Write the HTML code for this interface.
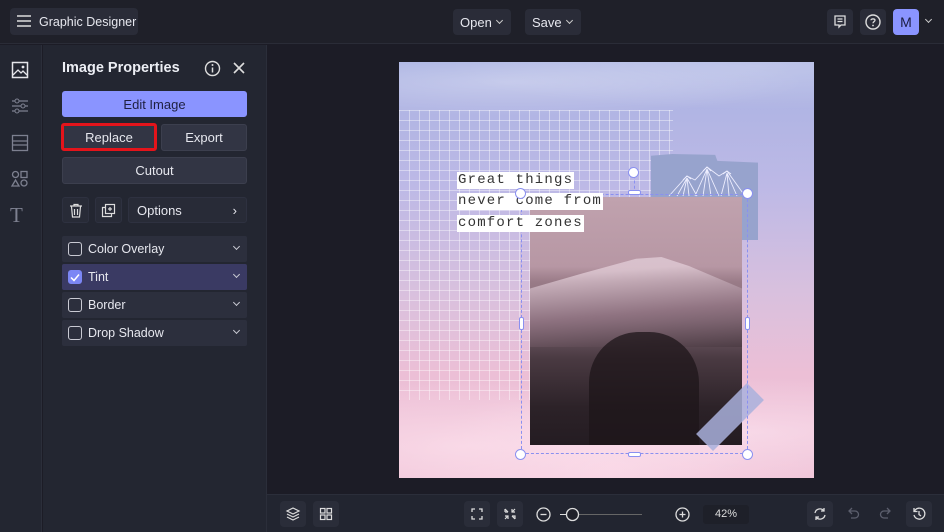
<!DOCTYPE html>
<html><head><meta charset="utf-8"><style>
*{box-sizing:border-box;margin:0;padding:0}
body{width:944px;height:532px;overflow:hidden;background:#1c1c26;font-family:"Liberation Sans",sans-serif;color:#e6e7ee;position:relative}
.abs{position:absolute}
.top{left:0;top:0;width:944px;height:44px;background:#1f2029;border-bottom:1px solid #2a2c37}
.btn{position:absolute;background:#2a2c38;border-radius:4px;font-size:13px;color:#e6e7ee;display:flex;align-items:center;justify-content:center;white-space:nowrap}
.rail{left:0;top:45px;width:42px;height:487px;background:#232631;border-right:1px solid #2b2e3a}
.panel{left:43px;top:45px;width:224px;height:487px;background:#232631;border-right:1px solid #2b2e3a}
.pb{position:absolute;background:#323544;border:1px solid #3c3f4e;border-radius:3px;font-size:13px;color:#e6e7ee;display:flex;align-items:center;justify-content:center}
.row{position:absolute;left:62px;width:185px;height:26px;background:#2c2f3d;border-radius:2px;font-size:12.5px;display:flex;align-items:center;padding-left:26px}
.row .cb{position:absolute;left:6px;top:6px;width:14px;height:14px;border:1.5px solid #c9cad3;border-radius:3px}
.row .ch{position:absolute;right:8px;top:8px;width:5px;height:5px;border-right:1.3px solid #c9cad3;border-bottom:1.3px solid #c9cad3;transform:rotate(45deg)}
.bottom{left:267px;top:494px;width:677px;height:38px;background:#222530;border-top:1px solid #2b2e3a}
.ib{position:absolute;width:26px;height:26px;background:#2a2d39;border-radius:4px}
.tx{position:absolute;font-family:"Liberation Mono",monospace;font-size:14px;background:#fff;color:#333;padding:0 1px;line-height:17px;letter-spacing:1.2px;white-space:nowrap}
</style></head><body>
<div class="abs top"></div>
<div class="btn" style="left:10px;top:8px;width:128px;height:27px;justify-content:flex-start;padding-left:29px;font-size:12.5px">Graphic Designer</div>
<svg class="abs" style="left:16px;top:14px" width="16" height="14"><path d="M1 2H15M1 7H15M1 12H15" stroke="#ddd" stroke-width="1.4"/></svg>
<div class="btn" style="left:453px;top:9px;width:58px;height:26px;justify-content:flex-start;padding-left:7px">Open<span style="position:absolute;left:44px;top:9px;width:5px;height:5px;border-right:1.2px solid #ccc;border-bottom:1.2px solid #ccc;transform:rotate(45deg)"></span></div>
<div class="btn" style="left:525px;top:9px;width:56px;height:26px;justify-content:flex-start;padding-left:7px">Save<span style="position:absolute;left:42px;top:9px;width:5px;height:5px;border-right:1.2px solid #ccc;border-bottom:1.2px solid #ccc;transform:rotate(45deg)"></span></div>
<div class="btn" style="left:827px;top:9px;width:26px;height:26px"><svg width="16" height="16"><path d="M3 2H13V11H9L7 13V11H3Z M5.5 5H10.5M5.5 7.5H10.5" stroke="#ddd" fill="none" stroke-width="1.3"/></svg></div>
<div class="btn" style="left:860px;top:9px;width:26px;height:26px"><svg width="18" height="18"><circle cx="9" cy="9" r="7" stroke="#ddd" fill="none" stroke-width="1.4"/><path d="M7 7.2C7 5.5 11 5.5 11 7.3C11 8.6 9 8.6 9 10.3" stroke="#ddd" fill="none" stroke-width="1.3"/><circle cx="9" cy="12.5" r=".9" fill="#ddd"/></svg></div>
<div class="btn" style="left:893px;top:9px;width:26px;height:26px;background:#8a94ff;color:#1a1c40;font-size:14px">M</div>
<div class="abs" style="left:926px;top:17px;width:5px;height:5px;border-right:1.2px solid #ccc;border-bottom:1.2px solid #ccc;transform:rotate(45deg)"></div>

<div class="abs rail"></div>
<svg class="abs" style="left:11px;top:61px" width="18" height="18"><rect x="1.5" y="1.5" width="15" height="15" fill="none" stroke="#e5e5ea" stroke-width="1.5"/><path d="M2 14L7 9L10 12L12 10L16 14" fill="none" stroke="#e5e5ea" stroke-width="1.3"/><circle cx="12" cy="6" r="1.4" fill="#e5e5ea"/></svg>
<svg class="abs" style="left:11px;top:97px" width="18" height="18"><path d="M1 4H17M1 9H17M1 14H17" stroke="#7d8090" stroke-width="1.3"/><circle cx="6" cy="4" r="2" fill="#232631" stroke="#7d8090"/><circle cx="12" cy="9" r="2" fill="#232631" stroke="#7d8090"/><circle cx="6" cy="14" r="2" fill="#232631" stroke="#7d8090"/></svg>
<svg class="abs" style="left:11px;top:134px" width="18" height="18"><rect x="1.5" y="1.5" width="15" height="15" fill="none" stroke="#7d8090" stroke-width="1.3"/><path d="M2 7H16M2 11H16" stroke="#7d8090" stroke-width="1.3"/></svg>
<svg class="abs" style="left:11px;top:170px" width="18" height="18"><circle cx="4.5" cy="4.5" r="3" fill="none" stroke="#7d8090" stroke-width="1.3"/><rect x="10" y="1.5" width="6" height="6" fill="none" stroke="#7d8090" stroke-width="1.3"/><path d="M4.5 10L8 16H1Z" fill="none" stroke="#7d8090" stroke-width="1.3"/><circle cx="13" cy="13" r="3" fill="none" stroke="#7d8090" stroke-width="1.3"/></svg>
<div class="abs" style="left:10px;top:203px;font-family:'Liberation Serif',serif;font-size:21px;color:#7d8090">T</div>

<div class="abs panel"></div>
<div class="abs" style="left:62px;top:60px;font-size:14.5px;font-weight:bold;color:#eceef4">Image Properties</div>
<svg class="abs" style="left:204px;top:60px" width="17" height="17"><circle cx="8.5" cy="8.5" r="7" fill="none" stroke="#ddd" stroke-width="1.4"/><path d="M8.5 7.5V12.5" stroke="#ddd" stroke-width="1.5"/><circle cx="8.5" cy="5" r="1" fill="#ddd"/></svg>
<svg class="abs" style="left:233px;top:62px" width="12" height="12"><path d="M1 1L11 11M11 1L1 11" stroke="#ddd" stroke-width="1.6"/></svg>
<div class="pb" style="left:62px;top:91px;width:185px;height:26px;background:#8a94ff;border-color:#8a94ff;color:#1e2040">Edit Image</div>
<div class="pb" style="left:61px;top:123px;width:96px;height:28px;border:3px solid #e4141b">Replace</div>
<div class="pb" style="left:161px;top:124px;width:86px;height:27px">Export</div>
<div class="pb" style="left:62px;top:157px;width:185px;height:27px">Cutout</div>
<div class="pb" style="left:62px;top:197px;width:27px;height:26px;background:#282b37;border-color:#2e3140"><svg width="14" height="15"><path d="M1 3H13M5 3V1.5H9V3M2.5 3.5L3.5 14H10.5L11.5 3.5M5.5 6V12M8.5 6V12" fill="none" stroke="#ddd" stroke-width="1.2"/></svg></div>
<div class="pb" style="left:95px;top:197px;width:27px;height:26px;background:#282b37;border-color:#2e3140"><svg width="15" height="15"><rect x="4.5" y="1.5" width="9" height="9" fill="none" stroke="#ddd" stroke-width="1.2"/><path d="M4.5 4.5H1.5V13.5H10.5V10.5M9 4V8M7 6H11" fill="none" stroke="#ddd" stroke-width="1.2"/></svg></div>
<div class="pb" style="left:128px;top:197px;width:119px;height:26px;background:#282b37;border-color:#2e3140;justify-content:flex-start;padding-left:8px">Options<span style="position:absolute;right:9px;font-size:13px">&#8250;</span></div>
<div class="row" style="top:236px"><span class="cb"></span>Color Overlay<span class="ch"></span></div>
<div class="row" style="top:264px;background:#3a3a63"><span class="cb" style="background:#7b86f5;border-color:#7b86f5"></span><svg class="abs" style="left:8px;top:9px" width="10" height="9"><path d="M1 4.5L4 7.5L9 1.5" fill="none" stroke="#fff" stroke-width="1.5"/></svg>Tint<span class="ch"></span></div>
<div class="row" style="top:292px"><span class="cb"></span>Border<span class="ch"></span></div>
<div class="row" style="top:320px"><span class="cb"></span>Drop Shadow<span class="ch"></span></div>

<!-- canvas -->
<div class="abs" style="left:399px;top:62px;width:415px;height:416px;overflow:hidden;background:linear-gradient(180deg,#a9b2e2 0%,#bdb9e6 30%,#d8c0de 55%,#ecbfd6 75%,#f0c4d8 100%)">
 <div class="abs" style="left:-40px;top:-20px;width:500px;height:80px;background:radial-gradient(ellipse at 30% 50%,rgba(255,255,255,.3),transparent 60%),radial-gradient(ellipse at 80% 30%,rgba(255,255,255,.25),transparent 55%)"></div>
 <div class="abs" style="left:-30px;top:300px;width:480px;height:140px;background:radial-gradient(ellipse at 20% 60%,rgba(255,230,240,.6),transparent 55%),radial-gradient(ellipse at 80% 50%,rgba(255,235,245,.5),transparent 55%),radial-gradient(ellipse at 50% 80%,rgba(255,225,238,.5),transparent 60%)"></div>
 <div class="abs" style="left:0;top:48px;width:274px;height:290px;background-image:linear-gradient(rgba(255,255,255,.4) 1px,transparent 1px),linear-gradient(90deg,rgba(255,255,255,.4) 1px,transparent 1px);background-size:10px 10px"></div>
 <div class="abs" style="left:252px;top:92px;width:107px;height:86px;background:#97a3cd;clip-path:polygon(0 2%,20% 0,60% 1%,62% 8%,100% 10%,100% 100%,0 100%)"></div>
 <svg class="abs" style="left:268px;top:100px" width="85" height="36"><g fill="none" stroke="#eef" stroke-width="0.9"><path d="M2 34L20 14L28 18L40 5L52 14L60 9L78 34"/><path d="M16 18L20 14L24 17M36 9L40 5L44 9M56 12L60 9L64 12M20 16L10 34M20 16L16 34M20 16L22 34M20 16L30 34M40 7L28 34M40 7L36 34M40 7L44 34M40 7L52 34M60 11L54 34M60 11L62 34M60 11L70 34"/></g></svg>
 <div class="abs" style="left:131px;top:135px;width:212px;height:248px;background:linear-gradient(180deg,#c0a2ae 0%,#b797a4 28%,#9a7c88 34%,#7b6470 50%,#4a3a42 65%,#2c2228 85%,#241c22 100%)"></div>
 <div class="abs" style="left:131px;top:195px;width:212px;height:90px;background:linear-gradient(175deg,rgba(230,210,220,.7) 20%,rgba(150,120,135,.7) 60%,rgba(70,55,62,.6) 100%);clip-path:polygon(0 35%,25% 18%,50% 2%,62% 0,75% 10%,100% 35%,100% 100%,0 100%)"></div>
 <div class="abs" style="left:190px;top:270px;width:110px;height:113px;background:#1d161a;border-radius:45% 45% 0 0;opacity:.75"></div>
 <div class="abs" style="left:295px;top:343px;width:72px;height:24px;background:#a9b0dc;opacity:.85;transform:rotate(-45deg)"></div>
 <div class="abs" style="left:122px;top:132px;width:227px;height:260px;border:1.5px dashed #8a90f0"></div>
 <div class="abs" style="left:235px;top:108px;width:0;height:24px;border-left:1.5px dashed #8a90f0"></div>
</div>
<div class="tx" style="left:457px;top:172px">Great things</div>
<div class="tx" style="left:457px;top:193px">never come from</div>
<div class="tx" style="left:457px;top:215px">comfort zones</div>
<!-- handles -->
<div class="abs" style="left:628px;top:167px;width:11px;height:11px;border-radius:50%;background:#fff;border:1.5px solid #8a90f0"></div>
<div class="abs" style="left:515px;top:188px;width:11px;height:11px;border-radius:50%;background:#fff;border:1.5px solid #8a90f0"></div>
<div class="abs" style="left:742px;top:188px;width:11px;height:11px;border-radius:50%;background:#fff;border:1.5px solid #8a90f0"></div>
<div class="abs" style="left:515px;top:449px;width:11px;height:11px;border-radius:50%;background:#fff;border:1.5px solid #8a90f0"></div>
<div class="abs" style="left:742px;top:449px;width:11px;height:11px;border-radius:50%;background:#fff;border:1.5px solid #8a90f0"></div>
<div class="abs" style="left:628px;top:190px;width:13px;height:5px;border-radius:2px;background:#fff;border:1px solid #8a90f0"></div>
<div class="abs" style="left:628px;top:452px;width:13px;height:5px;border-radius:2px;background:#fff;border:1px solid #8a90f0"></div>
<div class="abs" style="left:519px;top:317px;width:5px;height:13px;border-radius:2px;background:#fff;border:1px solid #8a90f0"></div>
<div class="abs" style="left:745px;top:317px;width:5px;height:13px;border-radius:2px;background:#fff;border:1px solid #8a90f0"></div>

<div class="abs bottom"></div>
<div class="ib" style="left:280px;top:501px"><svg width="26" height="26"><g fill="none" stroke="#ddd" stroke-width="1.2"><path d="M13 7L19 10L13 13L7 10Z"/><path d="M7 13L13 16L19 13M7 16L13 19L19 16"/></g></svg></div>
<div class="ib" style="left:313px;top:501px"><svg width="26" height="26"><g fill="none" stroke="#ddd" stroke-width="1.2"><rect x="7.5" y="7.5" width="4.5" height="4.5"/><rect x="14" y="7.5" width="4.5" height="4.5"/><rect x="7.5" y="14" width="4.5" height="4.5"/><rect x="14" y="14" width="4.5" height="4.5"/></g></svg></div>
<div class="ib" style="left:464px;top:501px"><svg width="26" height="26"><path d="M8 11V8H11M15 8H18V11M18 15V18H15M11 18H8V15" fill="none" stroke="#ddd" stroke-width="1.3"/></svg></div>
<div class="ib" style="left:497px;top:501px"><svg width="26" height="26"><path d="M8 8V11M8 11H11M11 11L8 8M18 8L15 11M15 8V11H18M8 18L11 15M8 15H11V18M18 18V15H15M15 15L18 18" fill="none" stroke="#ddd" stroke-width="1.2"/></svg></div>
<svg class="abs" style="left:535px;top:506px" width="110" height="17"><circle cx="8.5" cy="8.5" r="6.5" fill="none" stroke="#ddd" stroke-width="1.3"/><path d="M5.5 8.5H11.5" stroke="#ddd" stroke-width="1.3"/><path d="M25 8.5H31" stroke="#ddd" stroke-width="1"/><path d="M44 8.5H107" stroke="#666" stroke-width="1"/><circle cx="37.5" cy="8.5" r="6" fill="#1f2029" stroke="#ddd" stroke-width="1.3"/></svg>
<svg class="abs" style="left:674px;top:506px" width="17" height="17"><circle cx="8.5" cy="8.5" r="6.5" fill="none" stroke="#ddd" stroke-width="1.3"/><path d="M5.5 8.5H11.5M8.5 5.5V11.5" stroke="#ddd" stroke-width="1.3"/></svg>
<div class="abs" style="left:703px;top:505px;width:46px;height:19px;background:#1e2029;border-radius:3px;font-size:11px;color:#ddd;text-align:center;line-height:19px">42%</div>
<div class="ib" style="left:807px;top:501px"><svg width="26" height="26"><path d="M8 12A5 5 0 0 1 17 10M17 7V10H14M18 14A5 5 0 0 1 9 16M9 19V16H12" fill="none" stroke="#ddd" stroke-width="1.3"/></svg></div>
<div class="ib" style="left:840px;top:501px;background:none"><svg width="26" height="26"><path d="M10 10H15A3.5 3.5 0 0 1 15 17H11M12 7L9 10L12 13" fill="none" stroke="#5c5f6d" stroke-width="1.3"/></svg></div>
<div class="ib" style="left:873px;top:501px;background:none"><svg width="26" height="26"><path d="M16 10H11A3.5 3.5 0 0 0 11 17H15M14 7L17 10L14 13" fill="none" stroke="#5c5f6d" stroke-width="1.3"/></svg></div>
<div class="ib" style="left:906px;top:501px"><svg width="26" height="26"><path d="M8.5 10A5.5 5.5 0 1 1 8 14M8 7V10.5H11.5M13 10V13.5L15 15" fill="none" stroke="#ddd" stroke-width="1.3"/></svg></div>
</body></html>
